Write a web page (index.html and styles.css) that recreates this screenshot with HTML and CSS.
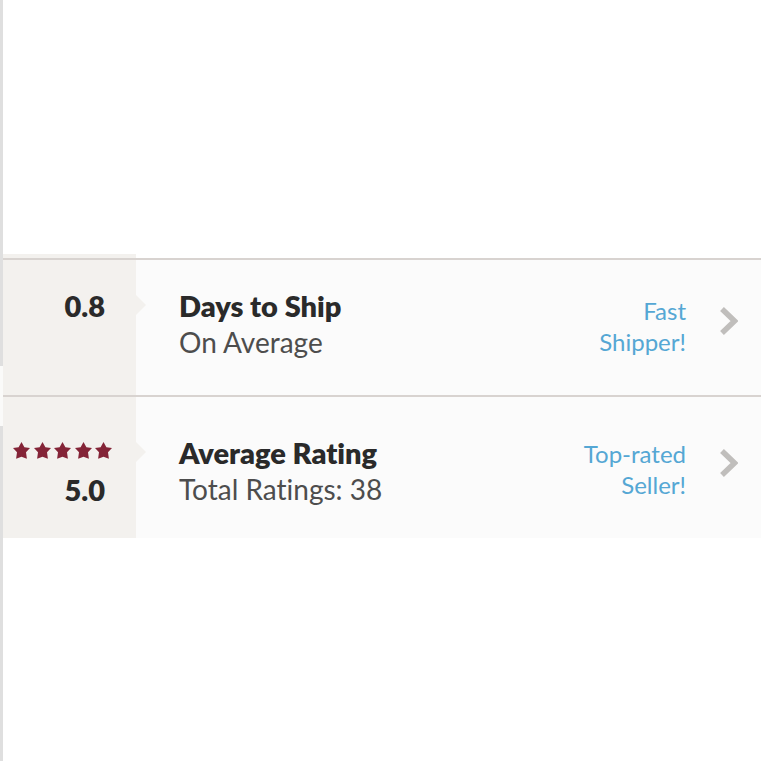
FILE: index.html
```
<!DOCTYPE html>
<html lang="en">
<head>
  <meta charset="UTF-8" />
  <meta name="viewport" content="width=device-width, initial-scale=1" />
  <title>Seller Stats</title>
  <link rel="stylesheet" href="styles.css">
</head>
<body>

<svg class="sprite" aria-hidden="true">
  <symbol id="star" viewBox="0 0 17 17">
    <path d="M8.500 0l2.900 5.300 5.600.7-4 4.300.9 6.400-5.400-2-5.400 2 .9-6.400L0 6l5.600-.7z" />
  </symbol>
  <symbol id="chevron" viewBox="0 0 18 28">
    <path d="M2 2l12.500 12L2 26" fill="none" stroke="#c0bebc" stroke-width="5.500" />
  </symbol>
</svg>

<div class="page">
  <div class="rail">
    <span class="rail-top"></span>
    <span class="rail-bottom"></span>
  </div>

  <main class="stats">
    <section class="row">
      <div class="score">
        <strong>0.8</strong>
      </div>
      <div class="info">
        <h2>Days to Ship</h2>
        <p>On Average</p>
      </div>
      <a class="more" href="#">
        <span>Fast<br>Shipper!</span>
        <svg class="chevron" aria-hidden="true"><use href="#chevron" /></svg>
      </a>
    </section>

    <section class="row row-rating">
      <div class="score">
        <div class="stars" role="img" aria-label="5 stars">
          <svg><use href="#star" /></svg>
          <svg><use href="#star" /></svg>
          <svg><use href="#star" /></svg>
          <svg><use href="#star" /></svg>
          <svg><use href="#star" /></svg>
        </div>
        <strong>5.0</strong>
      </div>
      <div class="info">
        <h2>Average Rating</h2>
        <p>Total Ratings: 38</p>
      </div>
      <a class="more" href="#">
        <span>Top-rated<br>Seller!</span>
        <svg class="chevron" aria-hidden="true"><use href="#chevron" /></svg>
      </a>
    </section>
  </main>
</div>

</body>
</html>
```
FILE: styles.css
```
* {
  box-sizing: border-box;
}

body {
  margin: 0;
  background-color: #fff;
  font-family: Lato, "Liberation Sans", sans-serif;
  font-size: 28px;
  line-height: 37px;
  font-variant-ligatures: none;
  color: #2a2a2a;
}

.sprite {
  display: none;
}

.page {
  display: flex;
  min-height: 100vh;
}

/* thin bar down the left edge, open beside the rows */
.rail {
  width: 3px;
  display: flex;
  flex-direction: column;
  gap: 60px;
  background-color: #fafaf9;
}

.rail span {
  background-color: #dfdfdf;
}

.rail-top {
  height: 366px;
}

.rail-bottom {
  flex: 1;
}

.stats {
  flex: 1;
  padding-top: 254px;
}

.stats::before {
  content: "";
  display: block;
  width: 133px;
  height: 4px;
  background-color: #f3f1ee;
}

.row {
  display: flex;
  border-top: 2px solid #d8d3d0;
  background-color: #fbfbfb;
}

.score,
.info,
.more {
  padding-top: 27px;
  padding-bottom: 34px;
}

.row-rating .score,
.row-rating .info,
.row-rating .more {
  padding-top: 37px;
  padding-bottom: 30px;
}

.score {
  position: relative;
  width: 133px;
  padding-right: 31px;
  background-color: #f3f1ee;
  text-align: right;
}

.score strong {
  display: block;
  font-size: 29px;
  font-weight: 800;
}

/* pointer towards the label */
.score::after {
  content: "";
  position: absolute;
  top: 35px;
  left: 100%;
  border: 10px solid transparent;
  border-left-color: #f3f1ee;
  border-right-width: 0;
}

.row-rating .score::after {
  top: 45px;
}

.stars {
  display: flex;
  justify-content: space-between;
  width: 99px;
  height: 37px;
  margin-left: 10px;
  padding-top: 8px;
}

.stars svg {
  flex: none;
  width: 17px;
  height: 17px;
  fill: #842437;
}

.info {
  flex: 1;
  padding-left: 43px;
}

.info h2,
.info p {
  margin: 0;
}

.info h2 {
  font-size: 29px;
  font-weight: 800;
}

.info p {
  color: #4d4d4d;
}

.more {
  display: flex;
  align-items: flex-start;
  gap: 34px;
  padding-right: 23px;
  color: #55a7d4;
  font-size: 24px;
  line-height: 31px;
  text-align: right;
  text-decoration: none;
}

.more span {
  margin-top: 8px;
}

.row-rating .more span {
  margin-top: 4px;
}

.chevron {
  width: 18px;
  height: 28px;
  margin-top: 20px;
}

.row-rating .chevron {
  margin-top: 15px;
}
```
